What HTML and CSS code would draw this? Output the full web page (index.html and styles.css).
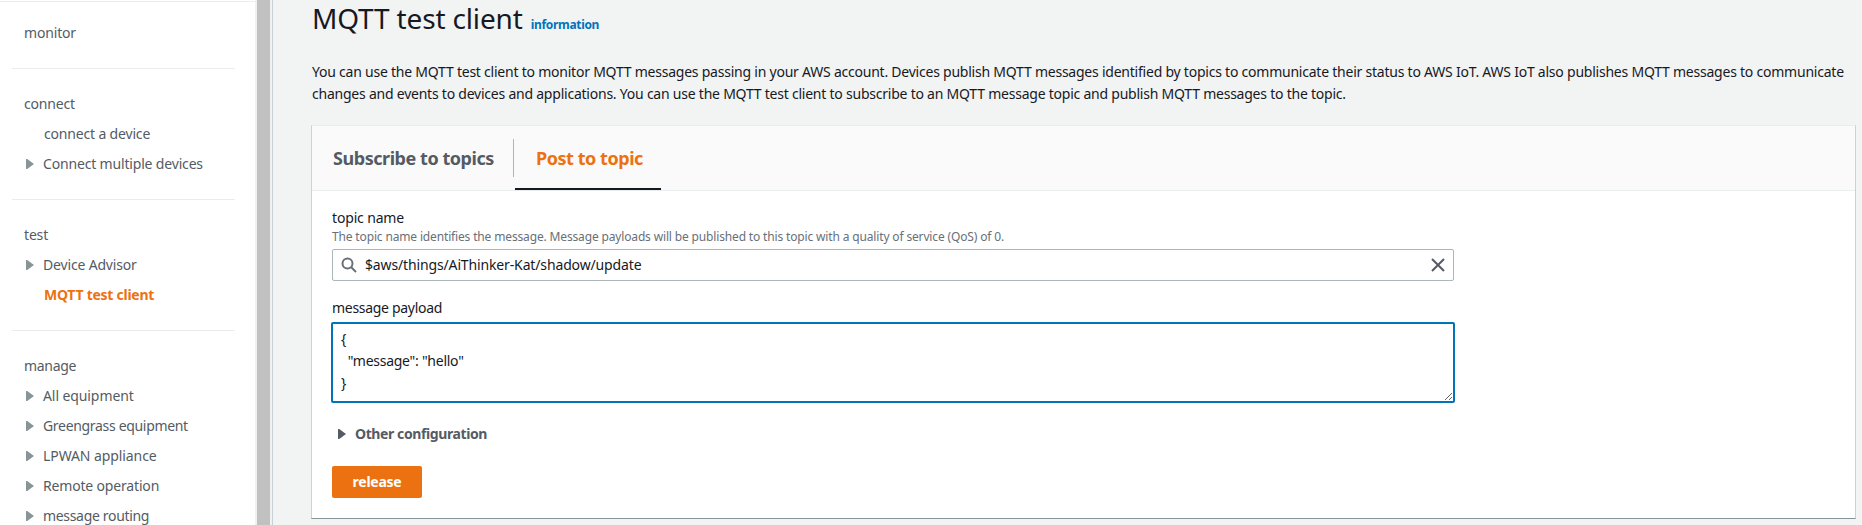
FILE: index.html
```html
<!DOCTYPE html>
<html lang="en">
<head>
<meta charset="utf-8">
<title>MQTT test client</title>
<link rel="stylesheet" href="styles.css">
</head>
<body>
<div class="app">
  <nav class="sidebar">
    <div class="group first"><span class="row head">monitor</span></div>
    <div class="group">
      <span class="row head">connect</span>
      <a class="row leaf">connect a device</a>
      <a class="row"><i class="caret"></i>Connect multiple devices</a>
    </div>
    <div class="group">
      <span class="row head">test</span>
      <a class="row"><i class="caret"></i>Device Advisor</a>
      <a class="row leaf active">MQTT test client</a>
    </div>
    <div class="group">
      <span class="row head snug">manage</span>
      <a class="row loose"><i class="caret"></i>All equipment</a>
      <a class="row snug"><i class="caret"></i>Greengrass equipment</a>
      <a class="row loose"><i class="caret"></i>LPWAN appliance</a>
      <a class="row"><i class="caret"></i>Remote operation</a>
      <a class="row snug"><i class="caret"></i>message routing</a>
    </div>
  </nav>
  <div class="scrollbar"></div>
  <main class="main">
    <header class="title"><h1>MQTT test client</h1><a class="info">information</a></header>
    <p class="intro">You can use the MQTT test client to monitor MQTT messages passing in your AWS account. Devices publish MQTT messages identified by topics to communicate their status to AWS IoT. AWS IoT also publishes MQTT messages to communicate<br>changes and events to devices and applications. You can use the MQTT test client to subscribe to an MQTT message topic and publish MQTT messages to the topic.</p>
    <section class="card">
      <div class="tabs">
        <a class="tab">Subscribe to topics</a>
        <a class="tab selected">Post to topic</a>
      </div>
      <form class="form">
        <label class="label">topic name</label>
        <div class="hint">The topic name identifies the message. Message payloads will be published to this topic with a quality of service (QoS) of 0.</div>
        <div class="input">
          <svg class="icon" viewBox="0 0 16 16"><circle cx="6.5" cy="6.5" r="5"/><path d="M10 10 15 15"/></svg>
          <span class="value">$aws/things/AiThinker-Kat/shadow/update</span>
          <svg class="icon clear" viewBox="0 0 16 16"><path d="M2 2 14 14M14 2 2 14"/></svg>
        </div>
        <label class="label payload">message payload</label>
        <textarea class="area" spellcheck="false">{
  "message": "hello"
}</textarea>
        <div class="more"><i class="caret dark"></i>Other configuration</div>
        <button type="button" class="btn">release</button>
      </form>
    </section>
  </main>
</div>
</body>
</html>
```
FILE: styles.css
```css
* { box-sizing: border-box; }
body {
  margin: 0;
  background: #f2f3f3;
  color: #16191f;
  font: 14px/22px "Noto Sans", sans-serif;
}
.app { display: flex; height: 525px; overflow: hidden; }
.sidebar { width: 255px; flex: none; background: #fff; padding-top: 1px; color: #545b64; letter-spacing: -0.17px; }
.group { margin: 0 20px 0 12px; padding: 24px 0; border-top: 1px solid #eaeded; display: flex; flex-direction: column; gap: 8px; }
.group.first { margin: 0; padding: 20px 0 24px 12px; }
.row { display: flex; align-items: center; padding-left: 14px; height: 22px; white-space: nowrap; }
.row.head { padding-left: 12px; }
.row.leaf { padding-left: 32px; }
.row.snug { letter-spacing: -0.32px; }
.row.loose { letter-spacing: -0.09px; }
.active { color: #ec7211; font-weight: 700; letter-spacing: -0.26px; }
.caret { width: 8px; height: 10px; margin-right: 9px; background: #879596; clip-path: polygon(0 0, 15% 0, 100% 50%, 15% 100%, 0 100%); }
.caret.dark { background: #545b64; }
.scrollbar { width: 18px; flex: none; background: #c1c1c1; border-left: 2px solid #f1f1f1; border-right: 1px solid #c8d0d3; box-shadow: inset -2px 0 #f1f1f1; }
.main { flex: 1; min-width: 0; padding: 0 6px 0 39px; }
.title { display: flex; align-items: baseline; gap: 8px; height: 50px; }
h1 { margin: 0; font-size: 28px; font-weight: 400; line-height: 36px; letter-spacing: -0.16px; }
.info { color: #0073bb; font-size: 12px; font-weight: 700; letter-spacing: -0.31px; }
.intro { margin: 11px 0 20px; white-space: nowrap; letter-spacing: -0.228px; }
.card { width: 1545px; height: 394px; margin-left: -1px; background: #fff; border: 1px solid #ccd1d1; border-top-color: #eaeded; border-bottom-color: #879596; }
.tabs { display: flex; height: 65px; background: #fafafa; border-bottom: 1px solid #eaeded; font-size: 18px; font-weight: 700; letter-spacing: -0.45px; color: #545b64; }
.tab { width: 202px; padding: 13px 0 0 21px; line-height: 38px; white-space: nowrap; background: linear-gradient(#aab7b8, #aab7b8) 100% 13px / 1px 38px no-repeat; }
.tab.selected { width: 146px; margin-left: 1px; color: #ec7211; background: none; border-bottom: 2px solid #16191f; }
.form { width: 1162px; padding: 16px 20px; }
.label { display: block; letter-spacing: -0.16px; }
.hint { font-size: 12px; line-height: 16px; height: 20px; color: #687078; white-space: nowrap; letter-spacing: -0.152px; }
.input { display: flex; align-items: center; height: 32px; padding: 0 7px 0 8px; border: 1px solid #aab7b8; border-radius: 2px; }
.icon { width: 16px; height: 16px; fill: none; stroke: #687078; stroke-width: 2; }
.icon.clear { stroke: #545b64; }
.value { flex: 1; padding-left: 8px; letter-spacing: -0.14px; }
.payload { margin-top: 16px; letter-spacing: -0.3px; }
.area { display: block; width: 1124px; height: 81px; margin: 3px 0 0 -1px; padding: 4px 8px; border: 2px solid #0073bb; border-radius: 2px; outline: none; font: inherit; letter-spacing: -0.26px; color: inherit; overflow: hidden; resize: both; }
.more { display: flex; align-items: center; height: 22px; margin: 20px 0 0 6px; font-weight: 700; letter-spacing: -0.4px; color: #545b64; }
.btn { display: block; width: 90px; height: 32px; margin-top: 21px; padding: 0; border: 0; border-radius: 2px; background: #ec7211; color: #fff; font: inherit; font-weight: 700; letter-spacing: -0.25px; }
```
